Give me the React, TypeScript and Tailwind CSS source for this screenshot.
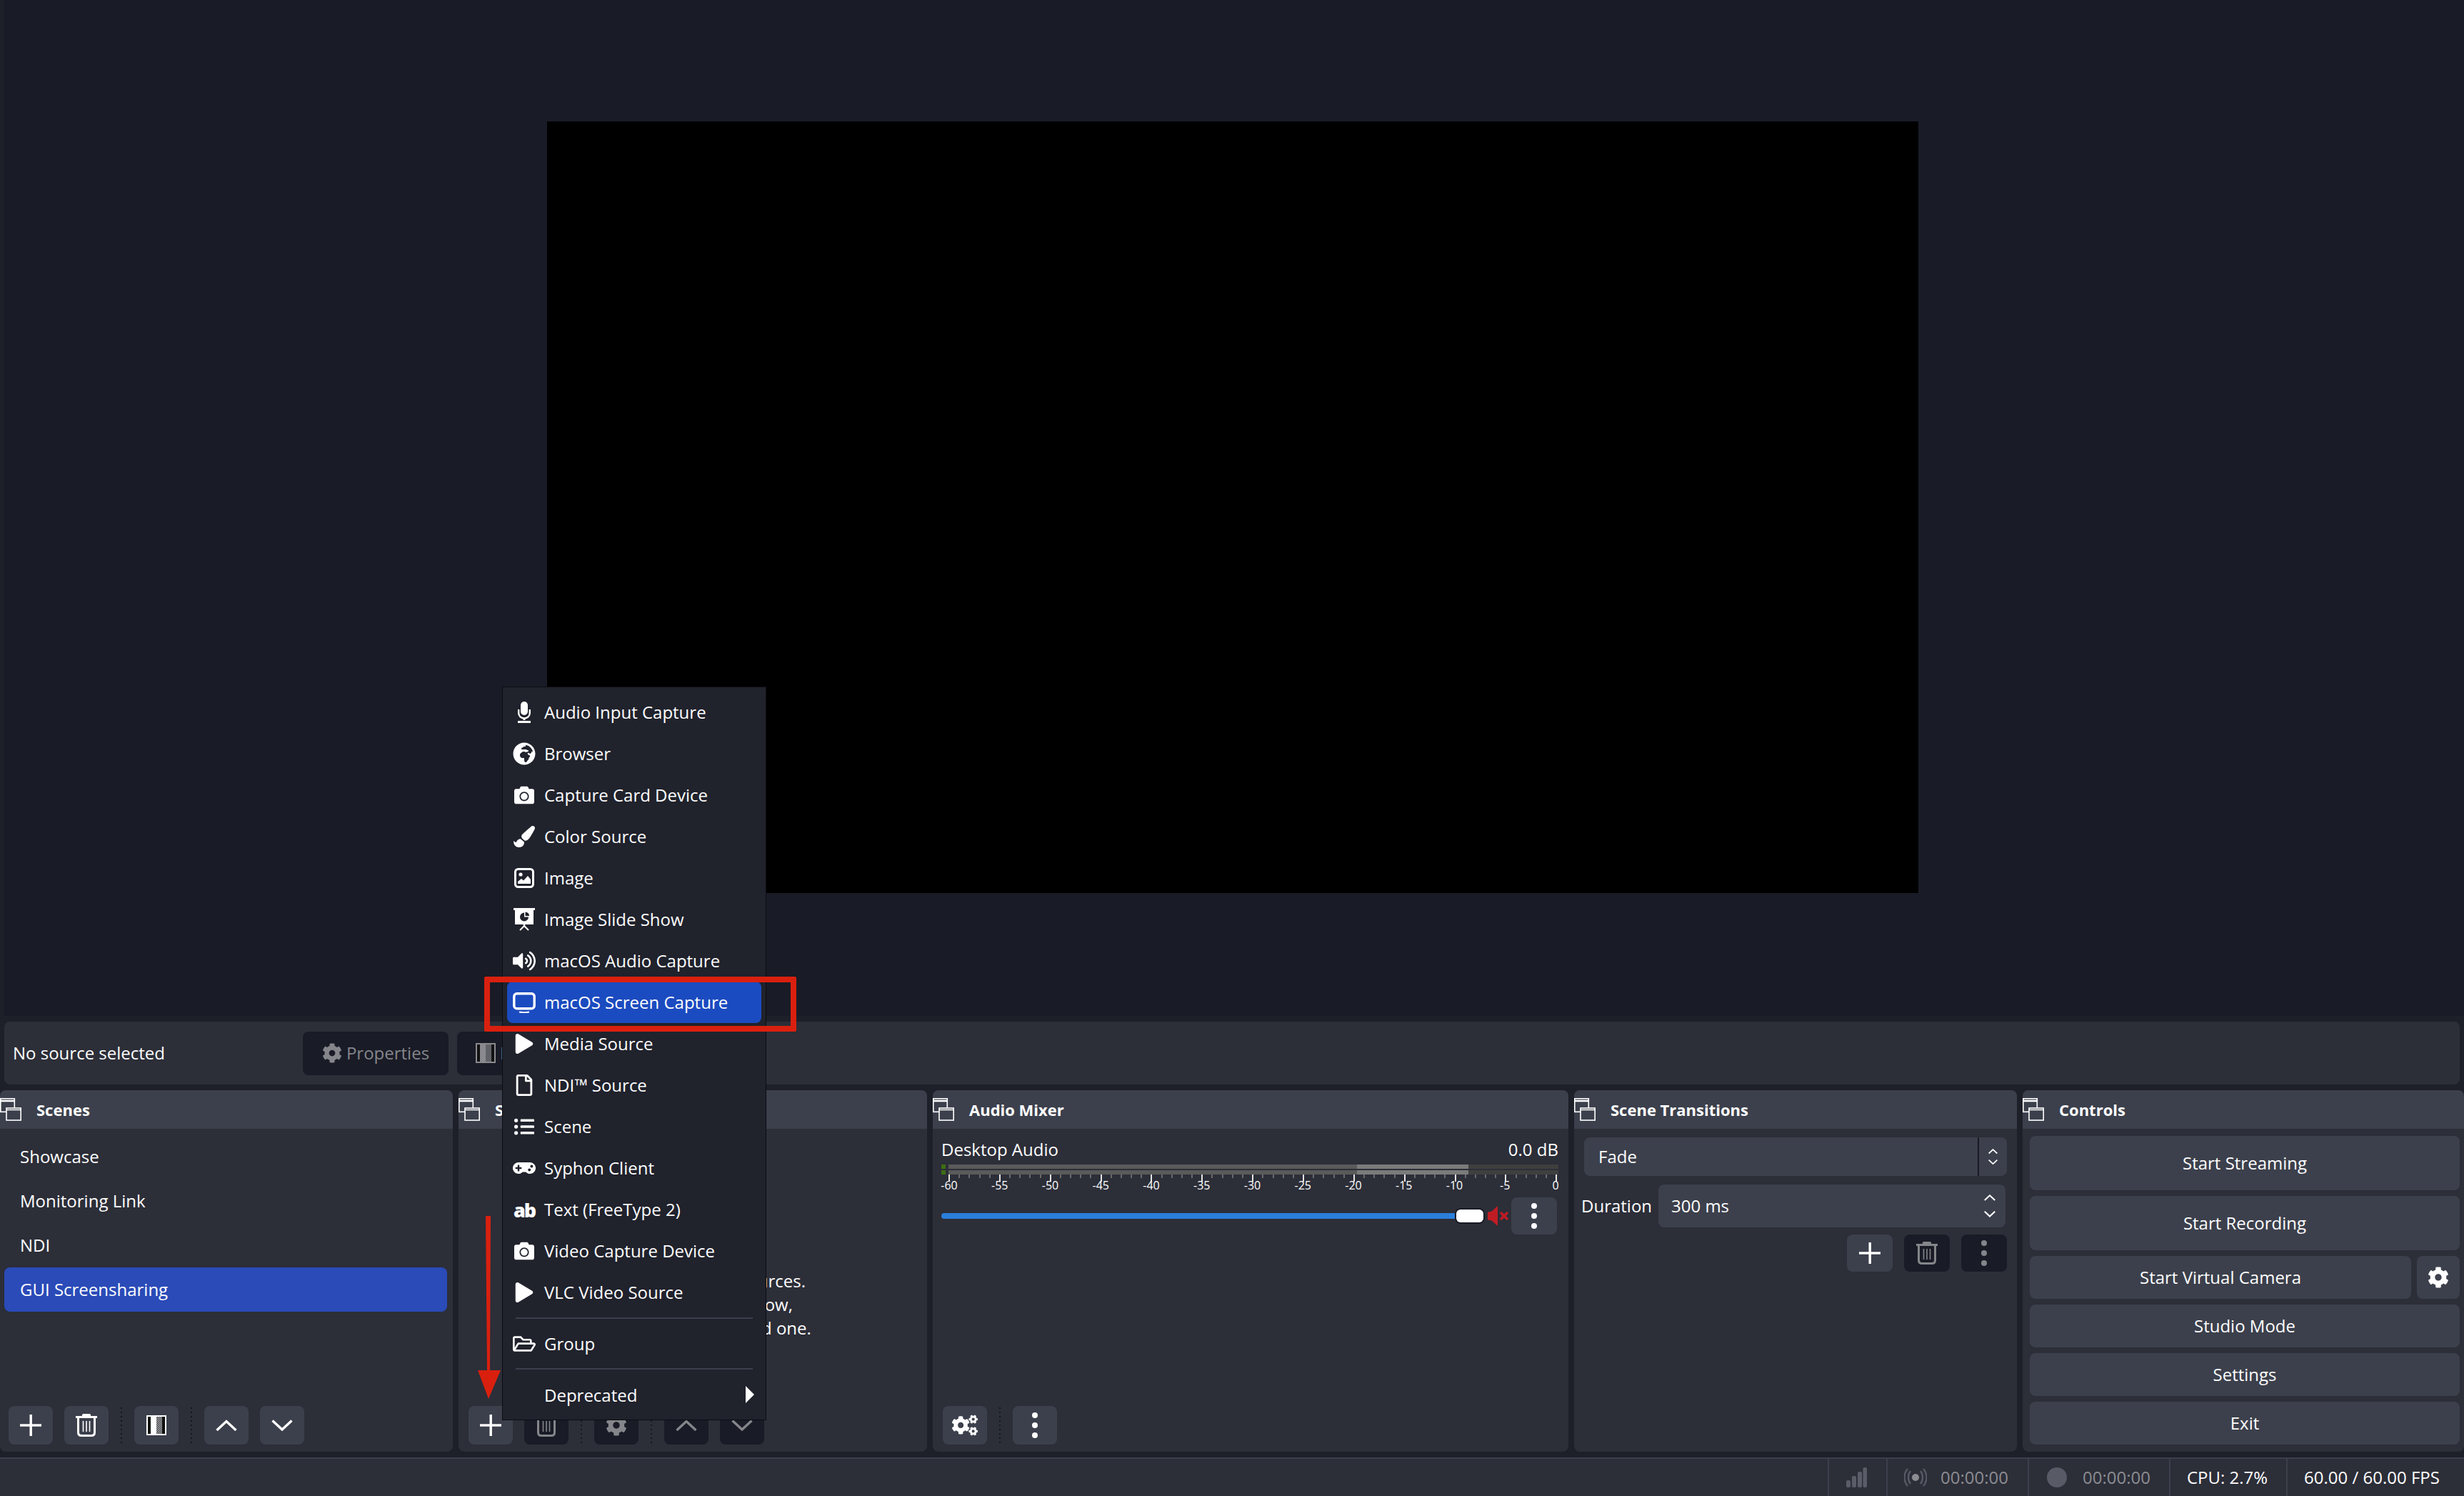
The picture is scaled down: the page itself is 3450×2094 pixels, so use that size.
import type { ReactNode } from "react";
import {
  FaGlobeAfrica,
  FaCamera,
  FaPaintBrush,
  FaVolumeUp,
  FaPlay,
  FaRegFile,
  FaListUl,
  FaGamepad,
  FaRegFolderOpen,
  FaCog,
  FaCogs,
} from "react-icons/fa";

const DockIcon = () => (
  <svg width="30" height="32" viewBox="0 0 30 32" fill="none" stroke="#fff" strokeWidth="1.600" className="shrink-0">
    <rect x="0.800" y="0.800" width="19.500" height="18.500" />
    <path d="M0.800 4h19.500" strokeWidth="2.600" />
    <rect x="9" y="14" width="20.200" height="17" fill="#3c404c" />
    <path d="M9 16.500h20.200" strokeWidth="1.600" />
  </svg>
);

const PlusIcon = ({ size = 30 }: { size?: number }) => (
  <svg width={size} height={size} viewBox="0 0 30 30" fill="#fff">
    <rect x="13.500" y="0" width="3.400" height="30" />
    <rect x="0" y="13.300" width="30" height="3.400" />
  </svg>
);

const TrashIcon = ({ color = "#fff" }: { color?: string }) => (
  <svg width="30" height="32" viewBox="0 0 30 32" fill="none" stroke={color}>
    <path d="M0 4.500h30" strokeWidth="3" />
    <path d="M10 3c0-2 1-2.400 2-2.400h6c1 0 2 .4 2 2.400" strokeWidth="2.400" fill={color} />
    <path d="M3.500 6v20c0 3 2 4.500 4.500 4.500h14c2.500 0 4.500-1.500 4.500-4.500V6" strokeWidth="3" />
    <path d="M10.500 10v15M15 10v15M19.500 10v15" strokeWidth="1.600" />
  </svg>
);

const FilterIcon = ({ dim = false }: { dim?: boolean }) => (
  <svg width="28" height="28" viewBox="0 0 28 28" className="shrink-0">
    <defs>
      <pattern id={dim ? "chkD" : "chk"} width="3" height="3" patternUnits="userSpaceOnUse">
        <rect width="3" height="3" fill="#3a3c44" />
        <rect width="1.500" height="1.500" fill={dim ? "#8a8a8e" : "#b5b5b5"} />
        <rect x="1.500" y="1.500" width="1.500" height="1.500" fill={dim ? "#8a8a8e" : "#b5b5b5"} />
      </pattern>
    </defs>
    <rect x="1" y="1" width="26" height="26" fill="#111" stroke={dim ? "#8a8a8e" : "#fff"} strokeWidth="2" />
    <rect x="6" y="2" width="8" height="24" fill={dim ? "#8a8a8e" : "#fff"} />
    <rect x="14" y="2" width="8" height="24" fill={`url(#${dim ? "chkD" : "chk"})`} />
  </svg>
);

const Chevron = ({ up, color = "#fff", w = 30, sw = 3.4 }: { up?: boolean; color?: string; w?: number; sw?: number }) => (
  <svg width={w} height={w * 0.55} viewBox="0 0 30 16.500" fill="none" stroke={color} strokeWidth={sw}>
    <path d={up ? "M1.500 15 15 2.500 28.500 15" : "M1.500 1.500 15 14 28.500 1.500"} />
  </svg>
);

const Kebab = ({ color = "#fff" }: { color?: string }) => (
  <svg width="8" height="36" viewBox="0 0 8 36" fill={color}>
    <circle cx="4" cy="4" r="4" />
    <circle cx="4" cy="18" r="4" />
    <circle cx="4" cy="32" r="4" />
  </svg>
);

const MicIcon = () => (
  <svg width="18" height="30" viewBox="0 0 18 30" fill="none" stroke="#fff">
    <rect x="4" y="0" width="10" height="19" rx="5" fill="#fff" stroke="none" />
    <path d="M1.200 11v5c0 4.500 3.500 7.500 7.800 7.500s7.800-3 7.800-7.500v-5" strokeWidth="2.400" />
    <path d="M9 23v3" strokeWidth="3" />
    <path d="M0 28.500h18" strokeWidth="3" />
  </svg>
);

const ImageIcon = () => (
  <svg width="28" height="28" viewBox="0 0 28 28" fill="#fff">
    <rect x="1.500" y="1.500" width="25" height="25" rx="4" fill="none" stroke="#fff" strokeWidth="3" />
    <circle cx="9" cy="9" r="2.600" />
    <path d="M5 22v-3l5-4 3 2.500 6-6.500 4 5v6z" />
  </svg>
);

const SlideShowIcon = () => (
  <svg width="30" height="32" viewBox="0 0 30 32" fill="#fff">
    <rect x="0" y="0" width="30" height="3" />
    <path d="M2 3h26v20H2z M15 6.500a6 6 0 1 0 6 6h-6z M16.500 5.500v5.500H22a5.500 5.500 0 0 0-5.500-5.500z" fillRule="evenodd" />
    <rect x="13.800" y="23" width="2.400" height="3" />
    <path d="M15 25l-6 6M15 25l6 6" stroke="#fff" strokeWidth="2" fill="none" />
  </svg>
);

const ScreenIcon = () => (
  <svg width="32" height="29" viewBox="0 0 32 29" fill="none" stroke="#fff">
    <rect x="1.800" y="1.800" width="28.400" height="21" rx="4" strokeWidth="3.400" />
    <path d="M9 27.500c4 .8 10 .8 14 0" strokeWidth="2" />
  </svg>
);

const SignalIcon = () => (
  <svg width="29" height="28" viewBox="0 0 29 28" fill="#5a5d67">
    <rect x="0" y="18" width="6" height="10" rx="2" />
    <rect x="8" y="12" width="6" height="16" rx="2" />
    <rect x="16" y="6" width="6" height="22" rx="2" />
    <rect x="23.500" y="0" width="5.500" height="28" rx="2" />
  </svg>
);

const StreamIcon = () => (
  <svg width="32" height="28" viewBox="0 0 32 28" fill="none" stroke="#585b65" strokeWidth="2.400">
    <circle cx="16" cy="14" r="5" fill="#8b8c92" stroke="none" />
    <path d="M9 5c-4 5-4 13 0 18M23 5c4 5 4 13 0 18M5 2C-1 9-1 19 5 26M27 2c6 7 6 17 0 24" />
  </svg>
);

const MuteIcon = () => (
  <svg width="31" height="28" viewBox="0 0 31 28" fill="#c01c23">
    <path d="M0 10c0-1 1-2 2-2h3L14 0v28l-9-8H2c-1 0-2-1-2-2z" />
    <path d="M18 9l10 10M28 9L18 19" stroke="#c01c23" strokeWidth="3.400" fill="none" />
  </svg>
);

const ToolBtn = ({ children, off, w = "w-[62px]", h = "h-[54px]" }: { children: ReactNode; off?: boolean; w?: string; h?: string }) => (
  <div className={`${w} ${h} shrink-0 rounded-lg flex items-center justify-center ${off ? "bg-[#191b26]" : "bg-[#3c404c]"}`}>
    {children}
  </div>
);

const Dots = () => (
  <div className="w-[36px] h-[54px] shrink-0 flex items-center justify-center">
    <div className="w-[2px] h-[50px] bg-[repeating-linear-gradient(to_bottom,#14161e_0,#14161e_2px,transparent_2px,transparent_6px)]" />
  </div>
);

const Dock = ({ title, width, children }: { title: string; width: string; children: ReactNode }) => (
  <section className={`${width} shrink-0 h-full flex flex-col bg-[#2c2e38] rounded-lg overflow-hidden`}>
    <header className="h-[54px] shrink-0 bg-[#3c404c] flex items-center gap-[21px] text-[22px] font-bold text-white">
      <DockIcon />
      <span>{title}</span>
    </header>
    {children}
  </section>
);

const menuItems: { label: string; icon: ReactNode }[] = [
  { label: "Audio Input Capture", icon: <MicIcon /> },
  { label: "Browser", icon: <FaGlobeAfrica size={32} /> },
  { label: "Capture Card Device", icon: <FaCamera size={28} /> },
  { label: "Color Source", icon: <FaPaintBrush size={30} /> },
  { label: "Image", icon: <ImageIcon /> },
  { label: "Image Slide Show", icon: <SlideShowIcon /> },
  { label: "macOS Audio Capture", icon: <FaVolumeUp size={32} /> },
  { label: "macOS Screen Capture", icon: <ScreenIcon /> },
  { label: "Media Source", icon: <FaPlay size={28} /> },
  { label: "NDI™ Source", icon: <FaRegFile size={30} /> },
  { label: "Scene", icon: <FaListUl size={28} /> },
  { label: "Syphon Client", icon: <FaGamepad size={32} /> },
  { label: "Text (FreeType 2)", icon: <span className="text-[27px] font-extrabold leading-none tracking-[-2px]">ab</span> },
  { label: "Video Capture Device", icon: <FaCamera size={28} /> },
  { label: "VLC Video Source", icon: <FaPlay size={28} /> },
];

const MenuRow = ({ label, icon, active }: { label: string; icon?: ReactNode; active?: boolean }) => (
  <div className={`h-[58px] mx-[6px] pl-[8px] flex items-center gap-[12px] rounded-lg ${active ? "bg-[#1b4bc0]" : ""}`}>
    <div className="w-[32px] flex items-center justify-center">{icon}</div>
    <span>{label}</span>
  </div>
);

const AddMenu = () => (
  <div className="absolute left-[703px] top-[961px] w-[370px] h-[1027px] bg-[#20222c] border border-[#0c0d12] pt-[6px] text-[24px] text-[#fefefe]">
    {menuItems.map((m) => (
      <MenuRow key={m.label} label={m.label} icon={m.icon} active={m.label === "macOS Screen Capture"} />
    ))}
    <div className="h-[2px] mx-[18px] mt-[6px] mb-[6px] bg-[#3c404c]" />
    <MenuRow label="Group" icon={<FaRegFolderOpen size={32} />} />
    <div className="h-[2px] mx-[18px] mt-[5px] mb-[7px] bg-[#3c404c]" />
    <div className="relative">
      <MenuRow label="Deprecated" />
      <div className="absolute right-[16px] top-[16px] w-0 h-0 border-y-[12px] border-y-transparent border-l-[12px] border-l-white" />
    </div>
  </div>
);

const dbLabels = ["-60", "-55", "-50", "-45", "-40", "-35", "-30", "-25", "-20", "-15", "-10", "-5", "0"];

const MeterBar = () => (
  <div className="h-[6px] flex">
    <div className="w-[6px] bg-[#3c6e12]" />
    <div className="w-[4px]" />
    <div className="w-[572px] bg-[#5a5a5a]" />
    <div className="w-[156px] bg-[#7b7b7b]" />
    <div className="flex-1 bg-[#3f3f3f]" />
  </div>
);

const AudioMixer = () => (
  <div className="flex-1 flex flex-col pl-[12px] pr-[14px] pb-[10px] text-[24px] text-[#fefefe]">
    <div className="h-[42px] mt-[8px] flex items-center justify-between shrink-0">
      <span>Desktop Audio</span>
      <span>0.0 dB</span>
    </div>
    <div className="flex flex-col gap-[2px]">
      <MeterBar />
      <MeterBar />
    </div>
    <div className="h-[10px] pl-[10px] pr-[1px] flex justify-between items-start">
      {Array.from({ length: 61 }, (_, i) => (
        <div key={i} className={`w-[2px] ${i % 5 === 0 ? "h-[10px] bg-[#e6e6e6]" : "h-[5px] bg-[#6a6a6a]"}`} />
      ))}
    </div>
    <div className="h-[10px] mb-[2px] pl-[11px] pr-[4px] flex justify-between text-[16px] leading-[10px]">
      {dbLabels.map((d) => (
        <div key={d} className="w-0 flex justify-center">
          <span>{d}</span>
        </div>
      ))}
    </div>
    <div className="h-[52px] mt-[10px] flex items-center pr-[2px]">
      <div className="flex-1 h-[8px] bg-[#2a7fdb] rounded-l-full" />
      <div className="w-[38px] h-[18px] bg-white rounded-md ring-2 ring-[#1a1c26]" />
      <div className="w-[37px] pl-[6px] flex items-center">
        <MuteIcon />
      </div>
      <div className="ml-[2px]">
        <ToolBtn w="w-[64px]" h="h-[52px]">
          <Kebab />
        </ToolBtn>
      </div>
    </div>
    <div className="mt-auto flex pl-[2px]">
      <ToolBtn>
        <FaCogs size={36} color="#fff" />
      </ToolBtn>
      <Dots />
      <ToolBtn>
        <Kebab />
      </ToolBtn>
    </div>
  </div>
);

const Transitions = () => (
  <div className="flex-1 flex flex-col pt-[12px] text-[24px] text-[#fefefe]">
    <div className="ml-[14px] w-[592px] h-[54px] rounded-lg bg-[#3c404c] flex items-center shrink-0">
      <span className="flex-1 pl-[20px]">Fade</span>
      <div className="w-[41px] h-full border-l-2 border-[#191b26] flex flex-col items-center justify-center gap-[7px]">
        <Chevron up w={13} sw={4} />
        <Chevron w={13} sw={4} />
      </div>
    </div>
    <div className="mt-[12px] pl-[10px] flex items-center h-[60px] shrink-0">
      <span className="w-[108px]">Duration</span>
      <div className="w-[486px] h-[60px] rounded-lg bg-[#3c404c] pl-[18px] pr-[14px] flex items-center justify-between">
        <span>300 ms</span>
        <div className="flex flex-col gap-[14px]">
          <Chevron up w={16} sw={4} />
          <Chevron w={16} sw={4} />
        </div>
      </div>
    </div>
    <div className="mt-[10px] pr-[14px] flex justify-end gap-[16px]">
      <ToolBtn w="w-[64px]" h="h-[52px]">
        <PlusIcon />
      </ToolBtn>
      <ToolBtn off w="w-[64px]" h="h-[52px]">
        <TrashIcon color="#85868b" />
      </ToolBtn>
      <ToolBtn off w="w-[64px]" h="h-[52px]">
        <Kebab color="#85868b" />
      </ToolBtn>
    </div>
  </div>
);

const CtrlBtn = ({ label, h }: { label: string; h: string }) => (
  <div className={`${h} rounded-lg bg-[#3c404c] flex items-center justify-center flex-1`}>{label}</div>
);

const Controls = () => (
  <div className="flex-1 flex flex-col gap-[8px] pt-[10px] pl-[10px] pr-[6px] text-[24px] text-[#fefefe]">
    <div className="flex"><CtrlBtn label="Start Streaming" h="h-[76px]" /></div>
    <div className="flex"><CtrlBtn label="Start Recording" h="h-[76px]" /></div>
    <div className="flex gap-[8px]">
      <CtrlBtn label="Start Virtual Camera" h="h-[60px]" />
      <ToolBtn w="w-[60px]" h="h-[60px]">
        <FaCog size={30} color="#fff" />
      </ToolBtn>
    </div>
    <div className="flex"><CtrlBtn label="Studio Mode" h="h-[60px]" /></div>
    <div className="flex"><CtrlBtn label="Settings" h="h-[60px]" /></div>
    <div className="flex"><CtrlBtn label="Exit" h="h-[60px]" /></div>
  </div>
);

const scenes = ["Showcase", "Monitoring Link", "NDI", "GUI Screensharing"];

const ScenesDock = () => (
  <div className="flex-1 flex flex-col pt-[8px] pb-[10px] text-[24px] text-[#fefefe]">
    <div className="flex-1 ml-[6px] mr-[8px]">
      {scenes.map((s) => (
        <div key={s} className={`h-[62px] pl-[22px] flex items-center rounded-lg ${s === "GUI Screensharing" ? "bg-[#2a4bb8]" : ""}`}>
          {s}
        </div>
      ))}
    </div>
    <div className="flex pl-[12px]">
      <ToolBtn><PlusIcon /></ToolBtn>
      <div className="w-[16px]" />
      <ToolBtn><TrashIcon /></ToolBtn>
      <Dots />
      <ToolBtn><FilterIcon /></ToolBtn>
      <Dots />
      <ToolBtn><Chevron up /></ToolBtn>
      <div className="w-[16px]" />
      <ToolBtn><Chevron /></ToolBtn>
    </div>
  </div>
);

const SourcesDock = () => (
  <div className="flex-1 flex flex-col pb-[10px] text-[24px] text-[#fefefe]">
    <div className="flex-1 pt-[196px] pl-[4px] text-center leading-[33px]">
      <p>You don't have any sources.</p>
      <p>Click the + button below,</p>
      <p>or right click here to add one.</p>
    </div>
    <div className="flex pl-[14px]">
      <ToolBtn><PlusIcon /></ToolBtn>
      <div className="w-[16px]" />
      <ToolBtn off><TrashIcon color="#85868b" /></ToolBtn>
      <Dots />
      <ToolBtn off><FaCog size={30} color="#85868b" /></ToolBtn>
      <Dots />
      <ToolBtn off><Chevron up color="#85868b" /></ToolBtn>
      <div className="w-[16px]" />
      <ToolBtn off><Chevron color="#85868b" /></ToolBtn>
    </div>
  </div>
);

const StatusCell = ({ w, children }: { w: string; children: ReactNode }) => (
  <div className={`${w} h-full border-l-2 border-[#3c404c] flex items-center`}>{children}</div>
);

const StatusBar = () => (
  <footer className="h-[54px] mt-[8px] shrink-0 bg-[#2c2e38] border-t-2 border-[#3c404c] flex justify-end text-[24px] text-[#fefefe]">
    <StatusCell w="w-[82px]">
      <div className="pl-[24px]"><SignalIcon /></div>
    </StatusCell>
    <StatusCell w="w-[198px]">
      <div className="pl-[23px] flex items-center gap-[19px]">
        <StreamIcon />
        <span className="text-[#8b8c92]">00:00:00</span>
      </div>
    </StatusCell>
    <StatusCell w="w-[198px]">
      <div className="pl-[25px] flex items-center gap-[22px]">
        <div className="w-[28px] h-[28px] rounded-full bg-[#585b65]" />
        <span className="text-[#8b8c92]">00:00:00</span>
      </div>
    </StatusCell>
    <StatusCell w="w-[164px]">
      <span className="pl-[23px]">CPU: 2.7%</span>
    </StatusCell>
    <StatusCell w="w-[249px]">
      <span className="pl-[23px]">60.00 / 60.00 FPS</span>
    </StatusCell>
  </footer>
);

const PropsBar = () => (
  <div className="h-[88px] mt-[8px] ml-[6px] mr-[6px] shrink-0 rounded-lg bg-[#2c2e38] flex items-center text-[24px]">
    <span className="w-[418px] pl-[12px] text-[#fefefe]">No source selected</span>
    <div className="w-[204px] h-[61px] rounded-lg bg-[#191b26] flex items-center justify-center gap-[6px] text-[#85868b]">
      <FaCog size={28} color="#85868b" />
      <span>Properties</span>
    </div>
    <div className="w-[160px] h-[61px] ml-[12px] rounded-lg bg-[#191b26] flex items-center gap-[6px] pl-[26px] text-[#85868b]">
      <FilterIcon dim />
      <span>Filters</span>
    </div>
  </div>
);

export default function App() {
  return (
    <div className="relative w-[3450px] h-[2094px] overflow-hidden bg-[#1d1f29] flex flex-col font-['Open_Sans',sans-serif]">
      <div className="h-[1422px] shrink-0 ml-[6px] pr-[4px] pb-[2px] bg-[#191b26] flex items-center justify-center">
        <div className="w-[1920px] h-[1080px] bg-black" />
      </div>
      <PropsBar />
      <div className="h-[506px] mt-[8px] shrink-0 flex gap-[8px]">
        <Dock title="Scenes" width="w-[634px]"><ScenesDock /></Dock>
        <Dock title="Sources" width="w-[656px]"><SourcesDock /></Dock>
        <Dock title="Audio Mixer" width="w-[890px]"><AudioMixer /></Dock>
        <Dock title="Scene Transitions" width="w-[620px]"><Transitions /></Dock>
        <Dock title="Controls" width="w-[618px]"><Controls /></Dock>
      </div>
      <StatusBar />

      <AddMenu />

      {/* red annotation box and arrow drawn over the screenshot */}
      <div className="absolute left-[678px] top-[1367px] w-[437px] h-[77px] border-[8px] border-[#d9200f] rounded-[2px]" />
      <svg className="absolute left-[666px] top-[1702px]" width="36" height="257" viewBox="0 0 36 257" fill="#d9200f">
        <path d="M14 0h7l-1 216h15L18 256 3 216h13z" />
      </svg>
    </div>
  );
}
